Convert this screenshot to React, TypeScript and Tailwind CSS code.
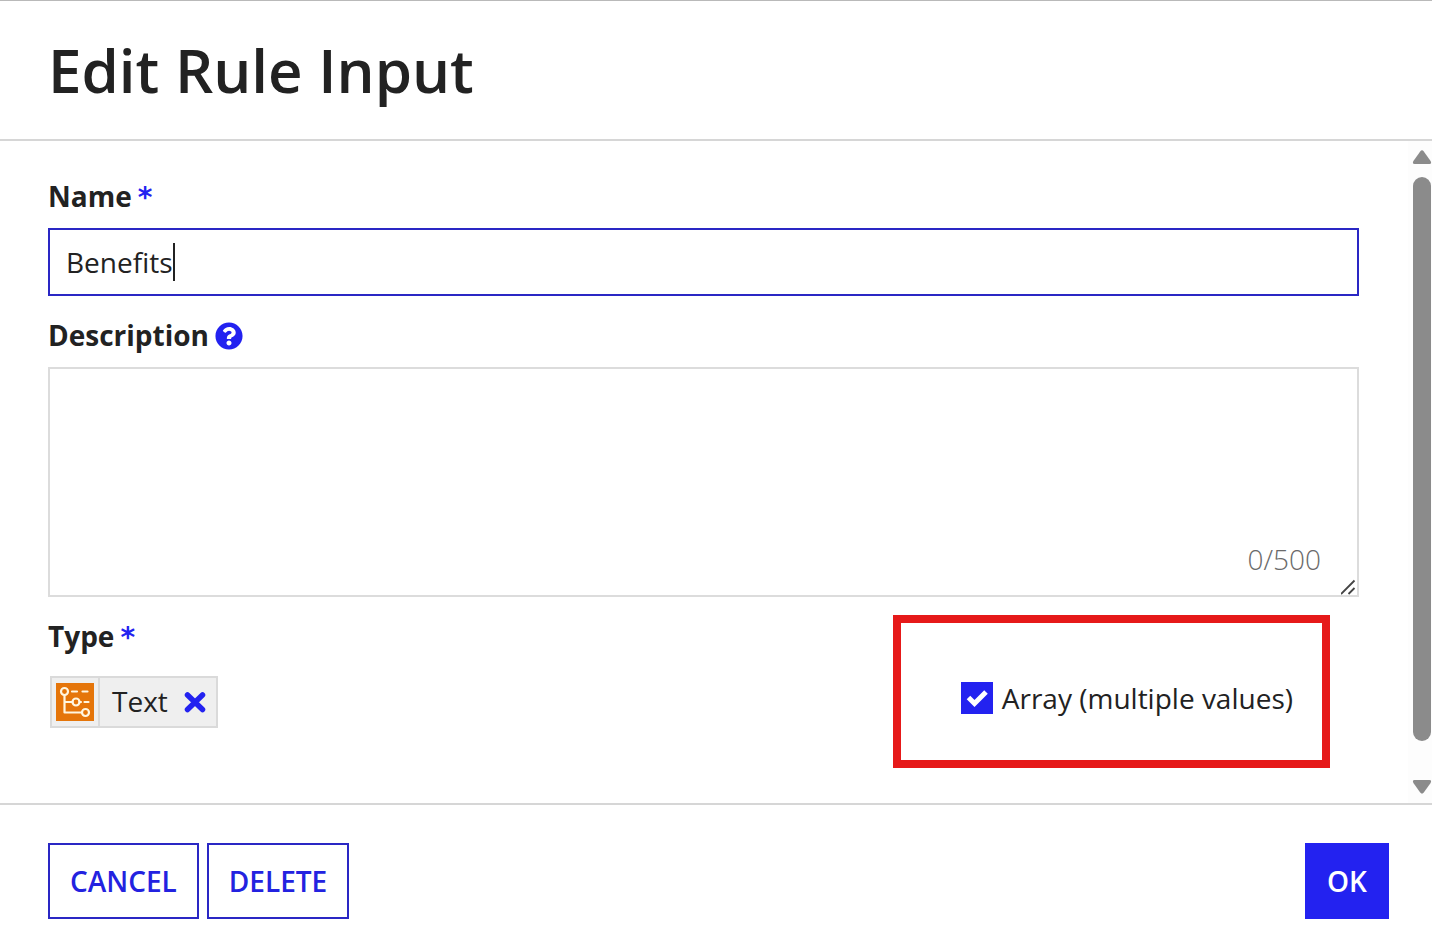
import { useState } from "react";
import type { ReactNode } from "react";

function FieldLabel({
  htmlFor,
  required,
  children,
}: {
  htmlFor: string;
  required?: boolean;
  children: ReactNode;
}) {
  return (
    <label htmlFor={htmlFor} className="pb-px text-[28px] leading-[39px] font-bold">
      {children}
      {required && (
        <span className="ml-1.5 font-['DejaVu_Sans',sans-serif] leading-none font-bold text-[#2322f0]">*</span>
      )}
    </label>
  );
}

function HelpIcon() {
  return (
    <svg viewBox="0 0 512 512" className="size-7" fill="#2322f0" aria-hidden="true">
      <path d="M504 256c0 136.997-111.043 248-248 248S8 392.997 8 256C8 119.083 119.043 8 256 8s248 111.083 248 248zM262.655 90c-54.497 0-89.255 22.957-116.549 63.758-3.536 5.286-2.353 12.415 2.715 16.258l34.699 26.31c5.205 3.947 12.621 3.008 16.665-2.122 17.864-22.658 30.113-35.797 57.303-35.797 20.429 0 45.698 13.148 45.698 32.958 0 14.976-12.363 22.667-32.534 33.976C247.128 238.528 216 254.941 216 296v4c0 6.627 5.373 12 12 12h56c6.627 0 12-5.373 12-12v-1.333c0-28.462 83.186-29.647 83.186-106.667 0-58.002-60.165-102-116.531-102zM256 338c-25.365 0-46 20.635-46 46 0 25.364 20.635 46 46 46s46-20.636 46-46c0-25.365-20.635-46-46-46z" />
    </svg>
  );
}

function TypeIcon() {
  return (
    <svg viewBox="0 0 38 38" className="size-[38px]" fill="none" stroke="#fff6e0" strokeWidth="2.2" strokeLinecap="round" strokeLinejoin="round" aria-hidden="true">
      <rect width="38" height="38" fill="#e5750a" stroke="none" />
      <circle cx="8.5" cy="8.5" r="3.5" />
      <circle cx="20" cy="19" r="3.5" />
      <circle cx="29.5" cy="29.5" r="3.5" />
      <path d="M8.5 12v17.5H26M8.5 19h8M16 8.5h5M26.5 8.5h5M23.5 19h1.5M28.5 19h4" />
    </svg>
  );
}

function Scrollbar() {
  return (
    <div className="flex w-6 shrink-0 flex-col items-end bg-[#fdfdfd] pt-2 pb-2" aria-hidden="true">
      <svg viewBox="0 0 20 16" className="h-4 w-5" fill="#8b8b8b">
        <path d="M8.2 2.4Q10 .2 11.8 2.4L18.6 12Q20 15 17.5 15H2.5Q0 15 1.4 12Z" />
      </svg>
      <div className="mt-3 mr-px mb-[38px] w-[18px] flex-1 rounded-full bg-[#8b8b8b]" />
      <svg viewBox="0 0 20 16" className="h-4 w-5" fill="#8b8b8b">
        <path d="M8.2 13.6Q10 15.8 11.8 13.6L18.6 4Q20 1 17.5 1H2.5Q0 1 1.4 4Z" />
      </svg>
    </div>
  );
}

export default function App() {
  const [name, setName] = useState("Benefits");
  const [description, setDescription] = useState("");
  const [isArray, setIsArray] = useState(true);

  return (
    <div className="flex min-h-screen flex-col border-t border-[#b9b9b9] bg-white font-['Open_Sans',sans-serif] text-[#222222]">
      <header className="border-b-2 border-[#d6d6d6] px-12 py-[26px]">
        <h1 className="text-[60px] leading-[86px] font-semibold">Edit Rule Input</h1>
      </header>

      <main className="flex flex-1">
        <form id="rule-input" className="flex min-w-0 flex-1 flex-col pt-9 pr-[49px] pl-12">
          <FieldLabel htmlFor="name" required>
            Name
          </FieldLabel>
          <div className="mt-[11px] flex h-[68px] items-center border-2 border-[#2a27c4] px-4">
            <input
              id="name"
              value={name}
              onChange={(e) => setName(e.target.value)}
              className="field-sizing-content text-[28px] leading-10 caret-transparent outline-none"
            />
            <span className="h-[38px] w-0.5 bg-[#222222]" />
          </div>

          <div className="mt-5 flex items-center gap-1.5">
            <FieldLabel htmlFor="description">Description</FieldLabel>
            <button type="button" aria-label="Help">
              <HelpIcon />
            </button>
          </div>
          <div className="relative mt-[11px] flex">
            <textarea
              id="description"
              value={description}
              maxLength={500}
              onChange={(e) => setDescription(e.target.value)}
              className="h-[230px] w-full resize-none border-2 border-[#dcdcdc] px-4 py-3 text-[28px] leading-10 outline-none"
            />
            <span className="absolute right-[38px] bottom-[18px] text-[28px] leading-10 font-light text-[#6a6a6a]">
              {description.length}/500
            </span>
            <svg viewBox="0 0 16 16" className="absolute right-0.5 bottom-0.5 size-4" stroke="#444" strokeWidth="1.8" aria-hidden="true">
              <path d="M0 15 13.5 1.5M7.5 15l6-6" />
            </svg>
          </div>

          <div className="flex items-start justify-between">
            <div className="mt-5 flex flex-col">
              <FieldLabel htmlFor="remove-type" required>
                Type
              </FieldLabel>
              <div className="mt-[19px] ml-0.5 flex h-[52px] items-stretch border-2 border-[#dadada] bg-[#efefef]">
                <span className="flex items-center border-r-2 border-[#dadada] px-1">
                  <TypeIcon />
                </span>
                <span className="pr-4 pl-3 text-[28px] leading-[46px]">Text</span>
                <button id="remove-type" type="button" aria-label="Remove Text" className="pr-2.5">
                  <svg viewBox="0 0 22 22" className="size-[22px]" fill="none" stroke="#2322f0" strokeWidth="5.5" strokeLinecap="round" aria-hidden="true">
                    <path d="M3.5 4 18.5 18.5M18.5 4 3.5 18.5" />
                  </svg>
                </button>
              </div>
            </div>

            <div className="mt-[18px] mr-[29px] mb-[35px] flex h-[153px] items-center border-8 border-[#e61919] pt-3 pr-[29px] pl-15">
              <label className="flex items-center gap-[9px] text-[28px] leading-10">
                <span className="relative flex">
                  <input
                    type="checkbox"
                    checked={isArray}
                    onChange={(e) => setIsArray(e.target.checked)}
                    className="peer size-8 appearance-none border-2 border-[#2322f0] checked:bg-[#2322f0]"
                  />
                  <svg viewBox="0 0 32 32" className="pointer-events-none absolute inset-0 hidden size-8 peer-checked:block" fill="none" stroke="white" strokeWidth="5" aria-hidden="true">
                    <path d="M7.5 15.5 13.5 21.5 25 10" />
                  </svg>
                </span>
                Array (multiple values)
              </label>
            </div>
          </div>
        </form>
        <Scrollbar />
      </main>

      <footer className="flex items-center gap-2 border-t-2 border-[#d6d6d6] pt-[38px] pr-[43px] pb-[33px] pl-12 text-[28px] leading-10 font-semibold">
        <button type="button" className="h-19 border-2 border-[#2a27c4] px-5 text-[#2322e0]">
          CANCEL
        </button>
        <button type="button" className="h-19 border-2 border-[#2a27c4] px-5 text-[#2322e0]">
          DELETE
        </button>
        <button type="submit" form="rule-input" className="ml-auto h-19 border-2 border-[#2322f0] bg-[#2322f0] px-5 text-white">
          OK
        </button>
      </footer>
    </div>
  );
}
